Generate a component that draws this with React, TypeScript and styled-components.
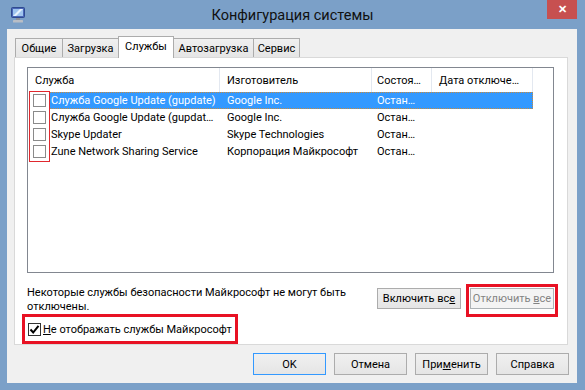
import React from "react";
import styled, { createGlobalStyle, css } from "styled-components";

const GlobalStyle = createGlobalStyle`
  html, body {
    margin: 0;
    padding: 0;
    background: #7ba0c8;
  }
  body {
    font-family: "Segoe UI", Roboto, "Liberation Sans", sans-serif;
    font-size: 11px;
    color: #000;
  }
`;

const services = [
  { name: "Служба Google Update (gupdate)", vendor: "Google Inc.", state: "Остан…", selected: true },
  { name: "Служба Google Update (gupdat…", vendor: "Google Inc.", state: "Остан…", selected: false },
  { name: "Skype Updater", vendor: "Skype Technologies", state: "Остан…", selected: false },
  { name: "Zune Network Sharing Service", vendor: "Корпорация Майкрософт", state: "Остан…", selected: false },
];

const tabs = [
  { label: "Общие", width: 48 },
  { label: "Загрузка", width: 57 },
  { label: "Службы", width: 56, active: true },
  { label: "Автозагрузка", width: 81 },
  { label: "Сервис", width: 47 },
];

const AppIcon = () => (
  <svg width="14" height="16" viewBox="0 0 14 16">
    <rect x="0.5" y="0.5" width="13" height="10" rx="1" fill="#4a67b8" stroke="#2f4a8f" />
    <rect x="2" y="2" width="10" height="7" fill="#9fc4ee" />
    <path d="M2 9 L9 2 H12 L5 9 Z" fill="#e6f1fc" />
    <rect x="5" y="11" width="4" height="2" fill="#8a8f99" />
    <rect x="2" y="13" width="10" height="2.5" rx="0.5" fill="#b9bec6" />
  </svg>
);

const CheckMark = () => (
  <svg width="11" height="11" viewBox="0 0 11 11">
    <path d="M1.5 5.5 L4.2 8.5 L9.5 1.8" fill="none" stroke="#000" strokeWidth="2" />
  </svg>
);

export default function App() {
  return (
    <>
      <GlobalStyle />
      <Window>
        <TitleBar>
          <IconSlot>
            <AppIcon />
          </IconSlot>
          <Title>Конфигурация системы</Title>
          <CloseSlot>
            <CloseButton>✕</CloseButton>
          </CloseSlot>
        </TitleBar>

        <Client>
          <TabStrip>
            {tabs.map((t) => (
              <Tab key={t.label} active={t.active} width={t.width}>
                {t.label}
              </Tab>
            ))}
          </TabStrip>

          <Panel>
            <ListBox>
              <HeaderRow>
                <HeaderCell>Служба</HeaderCell>
                <HeaderCell>Изготовитель</HeaderCell>
                <HeaderCell>Состоя…</HeaderCell>
                <HeaderCell>Дата отключе…</HeaderCell>
                <HeaderFiller />
              </HeaderRow>
              <Rows>
                {services.map((s) => (
                  <Row key={s.name}>
                    <CheckCell>
                      <Checkbox />
                    </CheckCell>
                    <RowBody selected={s.selected}>
                      <NameCell>{s.name}</NameCell>
                      <Cell>{s.vendor}</Cell>
                      <Cell>{s.state}</Cell>
                      <Cell />
                    </RowBody>
                  </Row>
                ))}
                <CheckMarker />
              </Rows>
            </ListBox>

            <Footer>
              <Note>
                Некоторые службы безопасности Майкрософт не могут быть
                <br />
                отключены.
              </Note>
              <EnableButton>
                Включить вс<u>е</u>
              </EnableButton>
              <Highlight>
                <Button disabled>
                  Отключить <u>в</u>се
                </Button>
              </Highlight>
            </Footer>

            <HideHighlight>
              <CheckLabel>
                <Checkbox checked>
                  <CheckMark />
                </Checkbox>
                <span>
                  <u>Н</u>е отображать службы Майкрософт
                </span>
              </CheckLabel>
            </HideHighlight>
          </Panel>

          <DialogButtons>
            <DialogButton primary>OK</DialogButton>
            <DialogButton>Отмена</DialogButton>
            <DialogButton>
              При<u>м</u>енить
            </DialogButton>
            <DialogButton>Справка</DialogButton>
          </DialogButtons>
        </Client>
      </Window>
    </>
  );
}

const Window = styled.div`
  width: 585px;
  height: 390px;
  display: flex;
  flex-direction: column;
  background: #7ba0c8;
  overflow: hidden;
`;

const TitleBar = styled.div`
  height: 29px;
  display: grid;
  grid-template-columns: 1fr auto 1fr;
  align-items: center;
`;

const IconSlot = styled.div`
  display: flex;
  padding-left: 11px;
  padding-top: 1px;
`;

const Title = styled.div`
  font-size: 14.5px;
  color: #101010;
  padding-top: 1px;
`;

const CloseSlot = styled.div`
  align-self: start;
  display: flex;
  justify-content: flex-end;
  padding-right: 8px;
`;

const CloseButton = styled.div`
  width: 30px;
  height: 19px;
  background: #c75050;
  color: #fff;
  font-size: 11px;
  font-weight: bold;
  display: flex;
  align-items: center;
  justify-content: center;
`;

const Client = styled.div`
  height: 354px;
  margin: 0 8px 0 7px;
  padding: 7px 9px 0 7px;
  box-sizing: border-box;
  background: #f0f0f0;
  display: flex;
  flex-direction: column;
`;

const TabStrip = styled.div`
  height: 21px;
  display: flex;
  align-items: flex-end;
  padding-left: 1px;
  position: relative;
  z-index: 1;
`;

const Tab = styled.div<{ active?: boolean; width: number }>`
  width: ${(p) => p.width}px;
  height: 19px;
  box-sizing: border-box;
  margin-right: -1px;
  display: flex;
  align-items: center;
  justify-content: center;
  border: 1px solid #acacac;
  border-bottom: none;
  background: linear-gradient(#f0f0f0, #e5e5e5);
  white-space: nowrap;

  ${(p) =>
    p.active &&
    css`
      height: 22px;
      margin-bottom: -1px;
      padding-bottom: 3px;
      background: #fff;
      position: relative;
      z-index: 2;
    `}
`;

const Panel = styled.div`
  height: 288px;
  box-sizing: border-box;
  border: 1px solid #d9d9d9;
  background: #fff;
  padding: 9px 13px 0 12px;
  display: flex;
  flex-direction: column;
`;

const ListBox = styled.div`
  height: 206px;
  box-sizing: border-box;
  border: 1px solid #828790;
  background: #fff;
  overflow: hidden;
`;

const columns = "192px 152px 60px 101px 1fr";

const HeaderRow = styled.div`
  height: 24px;
  display: grid;
  grid-template-columns: ${columns};
`;

const HeaderCell = styled.div`
  display: flex;
  align-items: center;
  padding-left: 7px;
  padding-top: 1px;
  border-right: 1px solid #e3e8f0;
  white-space: nowrap;
  overflow: hidden;
  &:nth-child(3) {
    padding-left: 5px;
  }
`;

const HeaderFiller = styled.div``;

const Rows = styled.div`
  position: relative;
  display: flex;
  flex-direction: column;
`;

const Row = styled.div`
  height: 17px;
  display: flex;
`;

const CheckCell = styled.div`
  width: 21px;
  display: flex;
  align-items: center;
  padding-left: 5px;
  box-sizing: border-box;
`;

const Checkbox = styled.div<{ checked?: boolean }>`
  width: 13px;
  height: 13px;
  box-sizing: border-box;
  border: 1px solid ${(p) => (p.checked ? "#333" : "#8a8a8a")};
  background: #fff;
  display: flex;
  align-items: center;
  justify-content: center;
  flex-shrink: 0;
`;

const RowBody = styled.div<{ selected?: boolean }>`
  display: grid;
  grid-template-columns: 171px 152px 60px 101px;
  align-items: center;
  box-sizing: border-box;

  ${(p) =>
    p.selected &&
    css`
      background: #3399ff;
      color: #fff;
      outline: 1px dotted #c98a3c;
      outline-offset: -1px;
    `}
`;

const Cell = styled.div`
  padding-left: 7px;
  white-space: nowrap;
  overflow: hidden;
  &:nth-child(3) {
    padding-left: 5px;
  }
`;

const NameCell = styled.div`
  padding-left: 2px;
  white-space: nowrap;
`;

const CheckMarker = styled.div`
  position: absolute;
  left: 1px;
  top: -1px;
  width: 21px;
  height: 71px;
  box-sizing: border-box;
  border: 1px solid #e0282e;
  pointer-events: none;
`;

const Footer = styled.div`
  margin-top: 11px;
  margin-right: -4px;
  display: flex;
  align-items: flex-start;
`;

const Note = styled.div`
  flex: 1;
  line-height: 14px;
  margin-top: 2px;
  white-space: nowrap;
`;

const Button = styled.button<{ primary?: boolean }>`
  width: 84px;
  height: 21px;
  padding: 0;
  font: inherit;
  color: #000;
  border: 1px solid ${(p) => (p.primary ? "#3399ff" : "#acacac")};
  background: linear-gradient(#f0f0f0, #e5e5e5);
  white-space: nowrap;

  &:disabled {
    color: #838383;
    border-color: #adb2b5;
    background: #f4f4f4;
  }
`;

const EnableButton = styled(Button)`
  margin-top: 4px;
  margin-right: 5px;
`;

const Highlight = styled.div`
  border: 3px solid #e81123;
  padding: 1px 1px 5px 1px;
`;

const HideHighlight = styled.div`
  align-self: flex-start;
  margin: -3px 0 0 -5px;
  border: 3px solid #e81123;
  height: 30px;
  box-sizing: border-box;
  padding: 0 3px 0 3px;
  display: flex;
  align-items: center;
`;

const CheckLabel = styled.label`
  display: flex;
  align-items: center;
  gap: 2px;
`;

const DialogButtons = styled.div`
  margin-top: 8px;
  margin-right: -1px;
  display: flex;
  justify-content: flex-end;
  gap: 8px;
`;

const DialogButton = styled(Button)`
  width: 73px;
  height: 22px;
`;
